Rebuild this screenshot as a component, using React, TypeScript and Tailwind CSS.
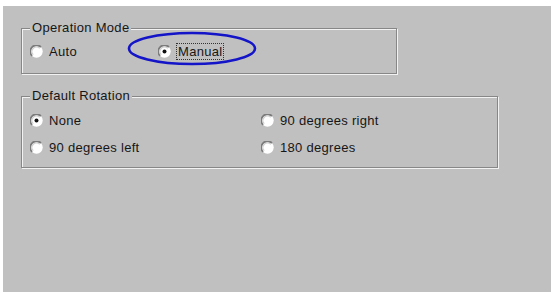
import React from 'react';

const Radio: React.FC<{ checked?: boolean }> = ({ checked }) => (
  <svg width="13" height="13" viewBox="0 0 13 13" className="shrink-0">
    <circle cx="6.5" cy="6.5" r="6.2" fill="#ffffff" />
    <path d="M2.1 10.9 A6.2 6.2 0 0 1 10.9 2.1" stroke="#7c7c7c" strokeWidth="1.8" fill="none" />
    <path d="M3.3 9.7 A4.5 4.5 0 0 1 9.7 3.3" stroke="#cfcfcf" strokeWidth="1.2" fill="none" />
    {checked && <circle cx="6.5" cy="6.5" r="2" fill="#111111" />}
  </svg>
);

const Option: React.FC<{ label: string; checked?: boolean; focused?: boolean; className?: string }> = ({
  label,
  checked,
  focused,
  className = '',
}) => (
  <div className={`flex items-center h-[15px] ${className}`}>
    <Radio checked={checked} />
    {focused ? (
      <span className="ml-[5px] border border-dotted border-[#333] px-[1px] leading-[15px]">{label}</span>
    ) : (
      <span className="ml-[6px] leading-[15px]">{label}</span>
    )}
  </div>
);

const Group: React.FC<{ title: string; className?: string; children: React.ReactNode }> = ({
  title,
  className = '',
  children,
}) => (
  <div className={`relative border border-[#878787] shadow-[inset_1px_1px_0_#f2f2f2,1px_1px_0_#f2f2f2] ${className}`}>
    <span className="absolute left-[8px] -top-[8px] bg-[#c0c0c0] px-[2px] leading-[14px]">{title}</span>
    {children}
  </div>
);

export default function App() {
  return (
    <div className="w-[554px] h-[292px] bg-white pt-[6px] px-[3px] overflow-hidden">
      <div
        className="relative h-full bg-[#c0c0c0] pl-[18px] pt-[22px] text-[13px] tracking-[0.3px] text-[#161616]"
        style={{ fontFamily: '"Liberation Sans", Arial, sans-serif' }}
      >
        <Group title="Operation Mode" className="w-[376px] h-[46px] pt-[15px] pl-[8px]">
          <div className="flex">
            <Option label="Auto" className="w-[128px]" />
            <Option label="Manual" checked focused />
          </div>
        </Group>

        <Group title="Default Rotation" className="mt-[22px] w-[477px] h-[72px] pt-[16px] pl-[8px]">
          <div className="grid grid-cols-[231px_1fr] gap-y-[12px]">
            <Option label="None" checked />
            <Option label="90 degrees right" />
            <Option label="90 degrees left" />
            <Option label="180 degrees" />
          </div>
        </Group>

        <svg className="absolute left-[124px] top-[25px]" width="130" height="35" viewBox="0 0 130 35">
          <ellipse cx="65" cy="17.5" rx="63" ry="15.5" fill="none" stroke="#1414c8" strokeWidth="2.6" />
        </svg>
      </div>
    </div>
  );
}
